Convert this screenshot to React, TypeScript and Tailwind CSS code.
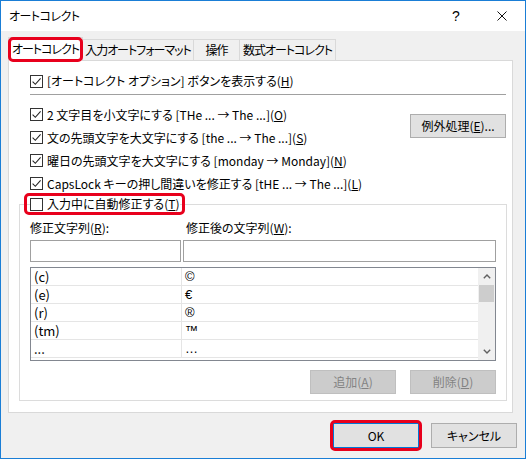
import React from "react";

const ROWS = [
  { from: "(c)", to: "©" },
  { from: "(e)", to: "€" },
  { from: "(r)", to: "®" },
  { from: "(tm)", to: "™" },
  { from: "...", to: "…" },
];

function Check({ checked }: { checked?: boolean }) {
  return (
    <span className="flex h-[13px] w-[13px] shrink-0 items-center justify-center border border-[#333333] bg-white">
      {checked && (
        <svg viewBox="0 0 11 11" width={11} height={11}>
          <path d="M1.6 5.6L4.3 8.3L9.6 2.4" fill="none" stroke="#222" strokeWidth="1.1" />
        </svg>
      )}
    </span>
  );
}

function Highlight({ className }: { className: string }) {
  return (
    <span
      className={`pointer-events-none absolute rounded-[5px] border-[3px] border-[#e8001c] ${className}`}
    />
  );
}

function CheckRow({
  checked,
  children,
  className = "h-[23px]",
}: {
  checked?: boolean;
  children: React.ReactNode;
  className?: string;
}) {
  return (
    <div className={`flex items-center gap-[4px] ${className}`}>
      <Check checked={checked} />
      <span className="whitespace-nowrap leading-[18px]">{children}</span>
    </div>
  );
}

export default function App() {
  return (
    <div className="flex h-[459px] w-[526px] flex-col border border-[#1a7ed6] bg-[#f0f0f0] text-[12px] text-black font-['Noto_Sans_CJK_JP',sans-serif] [font-feature-settings:'palt']">
      {/* Title bar */}
      <div className="flex h-[30px] shrink-0 items-center bg-white pl-[8px]">
        <span className="leading-[18px] tracking-[-0.5px]">オートコレクト</span>
        <span className="ml-auto w-[46px] text-center text-[14px] leading-[18px] font-['Liberation_Sans',sans-serif]">?</span>
        <span className="flex w-[46px] items-center justify-center">
          <svg viewBox="0 0 10 10" width={10} height={10}>
            <path d="M0.5 0.5L9.5 9.5M9.5 0.5L0.5 9.5" stroke="#111" strokeWidth="1" />
          </svg>
        </span>
      </div>

      <div className="flex flex-1 flex-col pl-[7px] pt-[6px]">
        {/* Tabs */}
        <div className="relative z-10 -mb-px flex h-[24px] items-end whitespace-nowrap tracking-[-1px]">
          <div className="relative flex h-[24px] w-[75px] items-center justify-center border border-b-0 border-[#d9d9d9] bg-white pb-[2px] leading-[18px]">
            オートコレクト
            <Highlight className="-left-[1px] -right-[1px] -top-[1px] -bottom-[1px]" />
          </div>
          <div className="flex h-[22px] w-[111px] items-center justify-center border border-l-0 border-[#d9d9d9] leading-[18px]">
            入力オートフォーマット
          </div>
          <div className="flex h-[22px] w-[46px] items-center justify-center border border-l-0 border-[#d9d9d9] leading-[18px]">
            操作
          </div>
          <div className="flex h-[22px] w-[96px] items-center justify-center border border-l-0 border-[#d9d9d9] leading-[18px]">
            数式オートコレクト
          </div>
        </div>

        {/* Panel */}
        <div className="flex h-[353px] w-[505px] flex-col border border-[#d9d9d9] bg-white pl-[21px] pr-[6px]">
          <CheckRow checked className="mt-[10px] h-[20px]">
            [オートコレクト オプション] ボタンを表示する(<u>H</u>)
          </CheckRow>
          <div className="mt-[3px] h-px bg-[#a0a0a0]" />

          <div className="mt-[8px] flex">
            <div className="flex flex-col">
              <CheckRow checked>
                2 文字目を小文字にする [THe ... → The ...](<u>O</u>)
              </CheckRow>
              <CheckRow checked>
                文の先頭文字を大文字にする [the ... → The ...](<u>S</u>)
              </CheckRow>
              <CheckRow checked>
                曜日の先頭文字を大文字にする [monday → Monday](<u>N</u>)
              </CheckRow>
              <CheckRow checked>
                CapsLock キーの押し間違いを修正する [tHE ... → The ...](<u>L</u>)
              </CheckRow>
            </div>
            <button className="ml-auto mt-[11px] flex h-[24px] w-[96px] items-center justify-center border border-[#adadad] bg-[#e1e1e1] leading-[18px]">
              例外処理(<u>E</u>)...
            </button>
          </div>

          {/* Group box */}
          <fieldset className="-ml-[11px] w-[488px] border border-[#dcdcdc] px-[10px] pb-[6px]">
            <legend className="relative">
              <CheckRow className="h-[18px]">
                入力中に自動修正する(<u>T</u>)
              </CheckRow>
              <Highlight className="-left-[6px] -right-[5px] -top-[2px] -bottom-[2px]" />
            </legend>

            <div className="mt-[6px] flex leading-[18px]">
              <span className="w-[156px]">
                修正文字列(<u>R</u>):
              </span>
              <span>
                修正後の文字列(<u>W</u>):
              </span>
            </div>

            <div className="mt-[3px] flex h-[22px]">
              <div className="w-[151px] border border-[#a0a0a0] bg-white" />
              <div className="ml-[2px] flex-1 border border-[#a0a0a0] bg-white" />
            </div>

            {/* List */}
            <div className="mt-[5px] flex h-[94px] border border-[#828790] bg-white">
              <div className="flex flex-1 flex-col overflow-hidden">
                {ROWS.map((r) => (
                  <div key={r.from} className="flex h-[18px] shrink-0 border-b border-[#e5e5e5] leading-[17px]">
                    <span className="w-[151px] shrink-0 border-r border-[#e5e5e5] pl-[3px] text-[13px]">
                      {r.from}
                    </span>
                    <span className="pl-[3px] text-[13px] font-['Liberation_Sans',sans-serif]">{r.to}</span>
                  </div>
                ))}
              </div>
              <div className="flex w-[17px] flex-col bg-[#f0f0f0]">
                <div className="flex h-[17px] items-center justify-center">
                  <svg viewBox="0 0 8 5" width={8} height={5}>
                    <path d="M0.8 4.2L4 1L7.2 4.2" fill="none" stroke="#606060" strokeWidth="1.4" />
                  </svg>
                </div>
                <div className="mx-[1px] h-[17px] bg-[#cdcdcd]" />
                <div className="mt-auto flex h-[17px] items-center justify-center">
                  <svg viewBox="0 0 8 5" width={8} height={5}>
                    <path d="M0.8 0.8L4 4L7.2 0.8" fill="none" stroke="#606060" strokeWidth="1.4" />
                  </svg>
                </div>
              </div>
            </div>

            <div className="mt-[9px] flex justify-end gap-[14px]">
              <button className="flex h-[24px] w-[86px] items-center justify-center border border-[#bfbfbf] bg-[#cccccc] leading-[18px] text-[#838383]">
                追加(<u>A</u>)
              </button>
              <button className="flex h-[24px] w-[86px] items-center justify-center border border-[#bfbfbf] bg-[#cccccc] leading-[18px] text-[#838383]">
                削除(<u>D</u>)
              </button>
            </div>
          </fieldset>
        </div>

        {/* Dialog buttons */}
        <div className="mt-[10px] flex justify-end gap-[12px] pr-[8px]">
          <button className="relative flex h-[25px] w-[86px] items-center justify-center border border-[#0078d7] bg-[#e1e1e1] leading-[18px]">
            OK
            <Highlight className="-inset-[4px]" />
          </button>
          <button className="flex h-[25px] w-[86px] items-center justify-center border border-[#adadad] bg-[#e1e1e1] leading-[18px]">
            キャンセル
          </button>
        </div>
      </div>
    </div>
  );
}
